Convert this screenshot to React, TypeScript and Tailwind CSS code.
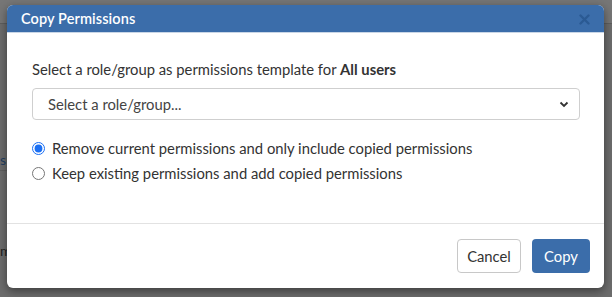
import React from 'react';

const App: React.FC = () => {
    return (
        <div className="relative w-[612px] h-[297px] overflow-hidden bg-[#6c6c6c] font-['Lato','Liberation_Sans',sans-serif]">
            {/* page behind the overlay */}
            <div className="h-[24px] bg-[#767676] border-b border-[#5e5e5e]"></div>
            <div className="absolute left-0 top-[149px] text-[14px] text-[#223e62]">s</div>
            <div className="absolute left-0 top-[170px] w-[40px] border-b border-[#5f5f5f]"></div>
            <div className="absolute left-0 top-[240px] text-[14px] text-[#1e1e1e]">m</div>

            {/* dialog */}
            <div className="absolute left-[7px] top-[5px] w-[597px] h-[283px] bg-white rounded-[6px] shadow-[0_3px_10px_rgba(0,0,0,0.45)] flex flex-col">
                <div className="h-[28px] bg-[#3b6daa] rounded-t-[6px] border-b border-[#c9d6e6] flex items-center justify-between pl-[14px] pr-[14px]">
                    <h2 className="text-[14.5px] font-semibold text-white tracking-[0.1px] pt-[1px]">Copy Permissions</h2>
                    <svg width="11" height="11" viewBox="0 0 11 11" className="mt-[1px]">
                        <path d="M1.5 1.5 L9.5 9.5 M9.5 1.5 L1.5 9.5" stroke="#2b5a93" strokeWidth="2.4" strokeLinecap="round" />
                    </svg>
                </div>

                <div className="flex-1 pt-[26px] px-[25px]">
                    <p className="text-[14.8px] leading-[20px] text-[#333]">
                        Select a role/group as permissions template for <span className="font-bold">All users</span>
                    </p>
                    <div className="mt-[9px] h-[32px] w-[548px] border border-[#cfcfcf] rounded-[4px] flex items-center justify-between pl-[15px] pr-[10px]">
                        <span className="text-[14.8px] text-[#444]">Select a role/group...</span>
                        <svg width="10" height="7" viewBox="0 0 10 7">
                            <path d="M1.5 1.5 L5 5 L8.5 1.5" fill="none" stroke="#333" strokeWidth="1.8" />
                        </svg>
                    </div>
                    <div className="mt-[18px] flex flex-col gap-[5px] text-[14.8px] leading-[20px] text-[#333]">
                        <label className="flex items-center gap-[7px]">
                            <input type="radio" name="mode" defaultChecked className="w-[13px] h-[13px] m-0 accent-[#1b6ff3]" />
                            Remove current permissions and only include copied permissions
                        </label>
                        <label className="flex items-center gap-[7px]">
                            <input type="radio" name="mode" className="w-[13px] h-[13px] m-0" />
                            Keep existing permissions and add copied permissions
                        </label>
                    </div>
                </div>

                <div className="border-t border-[#e2e2e2] pt-[15px] pb-[15px] pr-[14px] flex justify-end gap-[11px]">
                    <button className="h-[34px] w-[64px] border border-[#c8c8c8] rounded-[4px] bg-white text-[14.8px] text-[#333]">Cancel</button>
                    <button className="h-[34px] w-[58px] rounded-[4px] bg-[#3b6daa] text-[14.8px] text-white">Copy</button>
                </div>
            </div>
        </div>
    );
};

export default App;
